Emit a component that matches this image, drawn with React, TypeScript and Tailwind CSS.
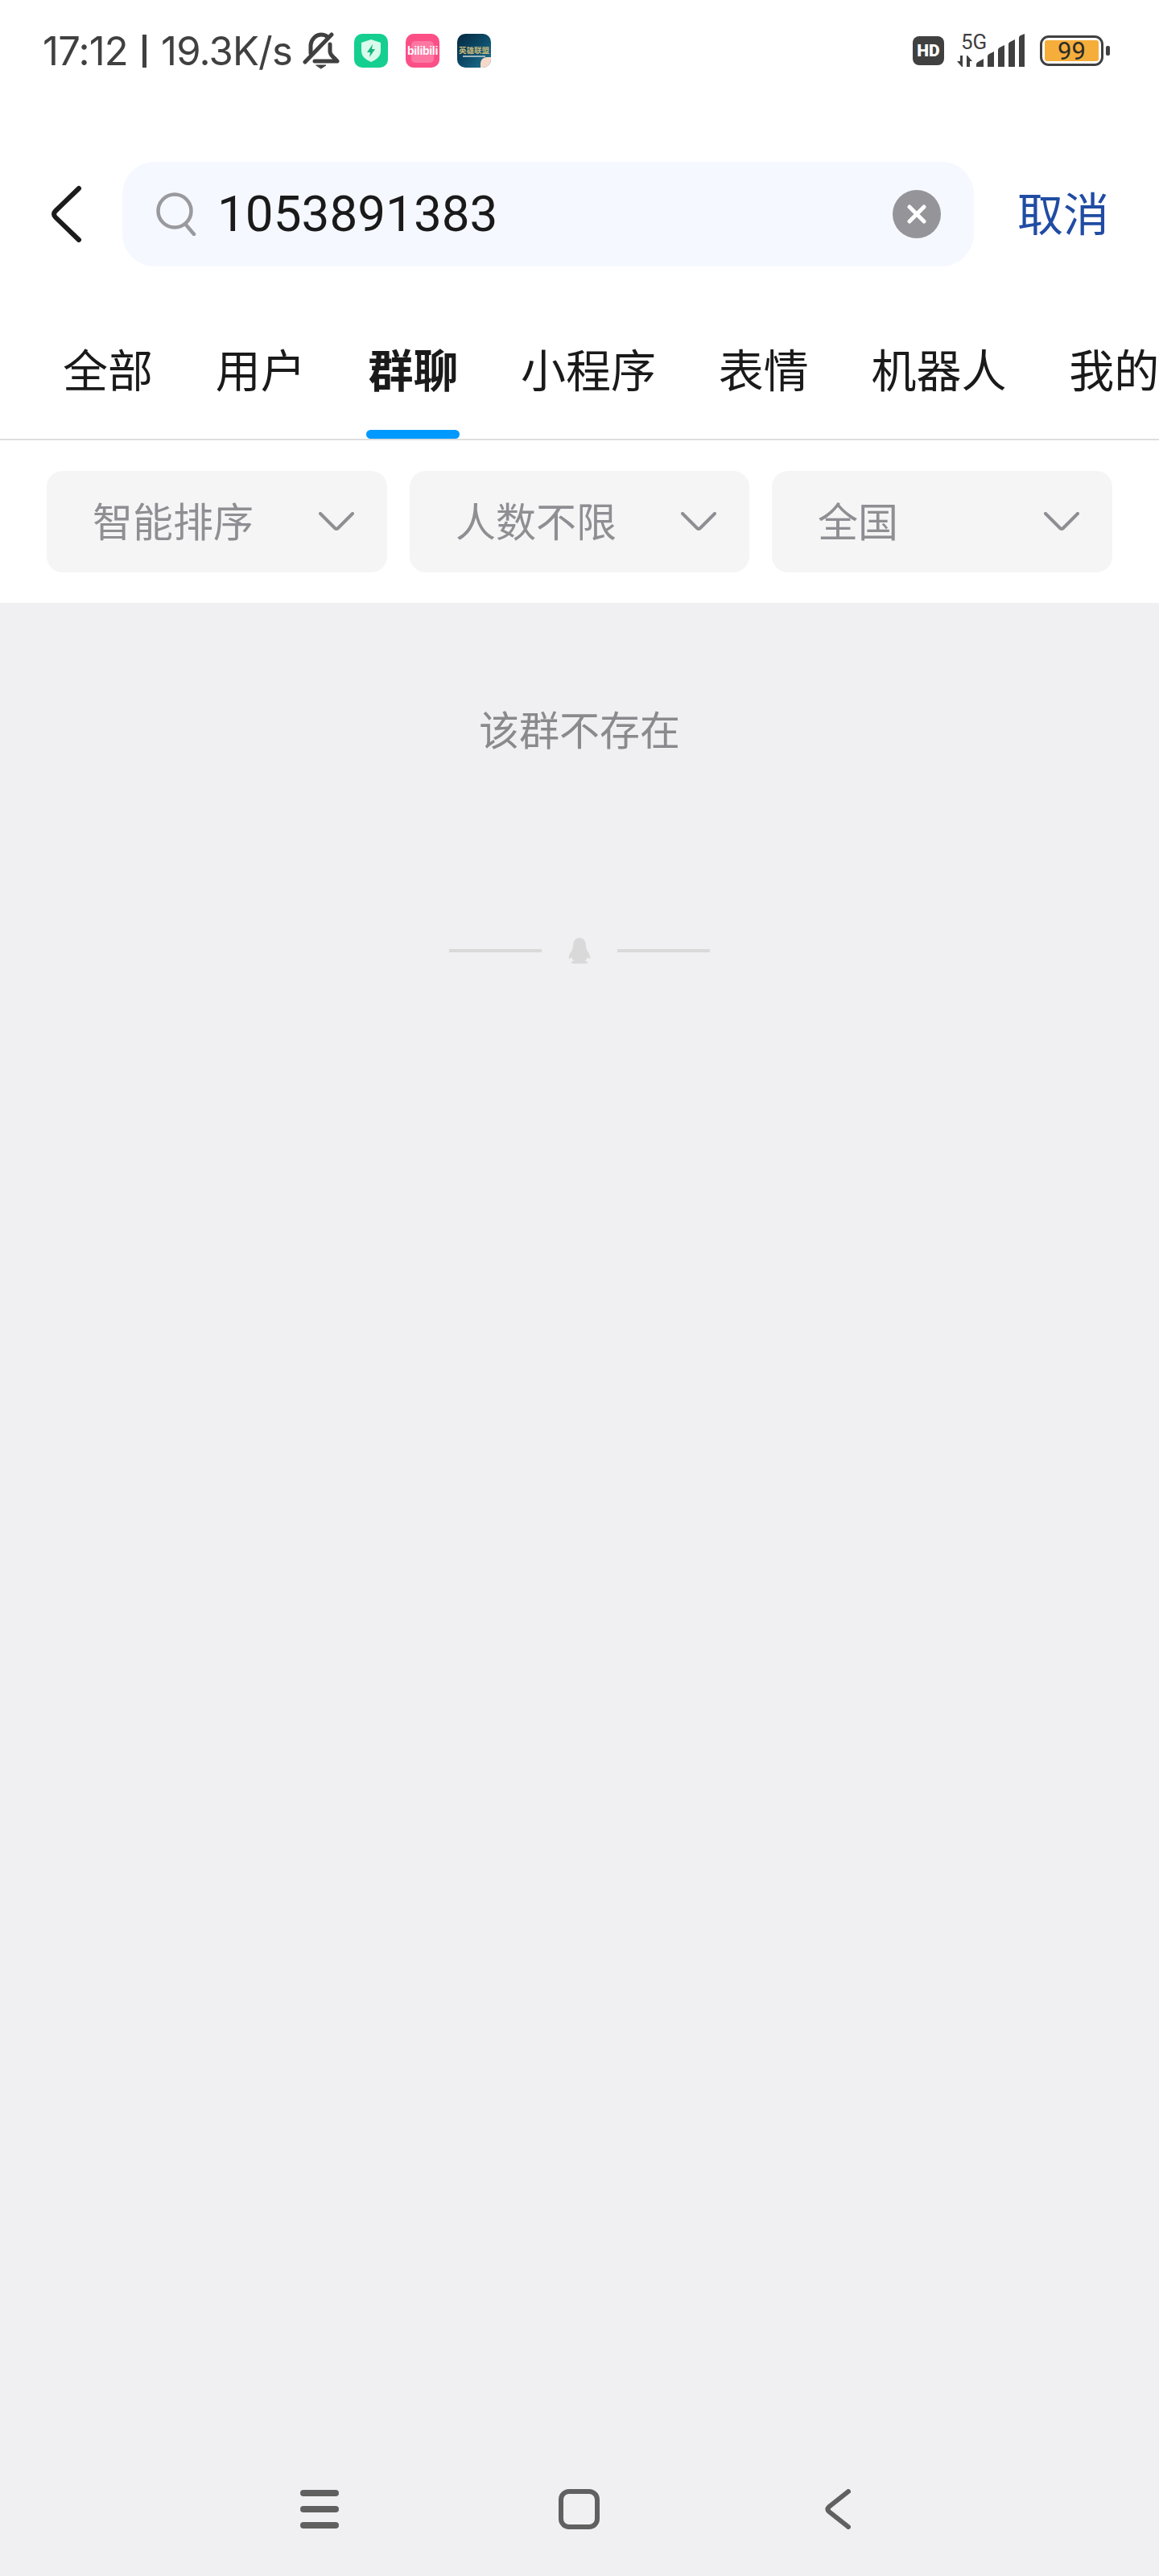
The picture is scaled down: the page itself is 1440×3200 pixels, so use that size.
const TABS = ['全部', '用户', '群聊', '小程序', '表情', '机器人', '我的'];
const FILTERS = [
  { label: '智能排序', width: 'w-[423px]' },
  { label: '人数不限', width: 'w-[422px]' },
  { label: '全国', width: 'w-[423px]' },
];
const CJK = "font-['Noto_Sans_CJK_SC','Noto_Sans',sans-serif]";

function Bell() {
  return (
    <svg width="46" height="46" viewBox="0 0 46 46" fill="none" stroke="#404040" strokeWidth="5" strokeLinecap="round" strokeLinejoin="round">
      <path d="M10 26V16C11 8 17 3 23 3c3 0 6 1 8 3" />
      <path d="M34 15v9c0 5 5 7 9 12H15" />
      <path d="M36 3 3 37" />
      <path d="M17 41h12l-6 4z" fill="#404040" strokeWidth="1" />
    </svg>
  );
}

function AppIcons() {
  return (
    <div className="ml-[18px] flex gap-[22px]">
      <div className="flex h-[42px] w-[42px] items-center justify-center rounded-[10px] bg-[#14cf90]">
        <svg width="26" height="30" viewBox="0 0 26 30">
          <path d="M13 1 25 5v10c0 7-5 11-12 14C6 26 1 22 1 15V5z" fill="#d9fbec" />
          <path d="M15 7 8 17h4l-1 6 7-10h-4z" fill="#14b57f" />
        </svg>
      </div>
      <div className="relative flex h-[42px] w-[42px] items-center justify-center overflow-hidden rounded-[10px] bg-[#fb4f86]">
        <div className="absolute left-[7px] top-[9px] h-[27px] w-[28px] rounded-[5px] bg-[#fd77a3]" />
        <span className="relative font-['Liberation_Sans',sans-serif] text-[14px] font-bold leading-none tracking-[-0.3px] text-white">bilibili</span>
      </div>
      <div className="relative flex h-[42px] w-[42px] flex-col items-center overflow-hidden rounded-[10px] bg-gradient-to-br from-[#06283f] via-[#0d4a68] to-[#1f7a94] pt-[15px]">
        <span className={`text-[9.5px] font-bold leading-[10px] text-[#c9b97a] ${CJK}`}>英雄联盟</span>
        <div className="mt-[2px] h-[2px] w-[28px] bg-[#9fb6bf]" />
        <div className="absolute bottom-0 right-0 h-[13px] w-[13px] rounded-tl-[8px] bg-[#f6d9c8]" />
      </div>
    </div>
  );
}

function Signal() {
  return (
    <div className="relative ml-[16px] h-[42px] w-[84px]">
      <span className="absolute left-[5px] top-[-3px] font-['Roboto',sans-serif] text-[26px] leading-[26px] text-[#404040]">5G</span>
      <svg className="absolute left-0 top-0" width="84" height="42" viewBox="0 0 84 42" fill="#404040">
        <path d="M0 34h4v-7h3v14h-1zM12 27h1l6 7h-3v7h-4z" />
        <path d="M24 41v-3q0-2 2-3l7-4v10zM38 41V28q0-2 2-3l6-3v19zM51 41V20q0-2 2-3l6-3v27zM64 41V13q0-2 2-3l6-3v34zM77 41V5q0-2 2-3l5-2v41z" />
      </svg>
    </div>
  );
}

function Battery() {
  return (
    <div className="ml-[19px] flex items-center gap-[3px]">
      <div className="flex h-[38px] w-[79px] rounded-[11px] border-[3px] border-[#404040] p-[3px]">
        <div className="flex flex-1 items-center justify-center rounded-[3px] bg-[#f5ae3a] font-['Roboto',sans-serif] text-[31px] leading-none text-[#2b2b2b]">99</div>
      </div>
      <div className="h-[12px] w-[5px] rounded-[2px] bg-[#404040]" />
    </div>
  );
}

function StatusBar() {
  return (
    <div className="flex h-[128px] items-center pb-[2px] pl-[53px] pr-[61px]">
      <span className="flex w-[310px] items-center justify-between font-['Inter',sans-serif] text-[49px] leading-none tracking-[-0.8px] text-[#404040]">
        <span>17:12</span>
        <span className="h-[41px] w-[5px] bg-[#404040]" />
        <span>19.3K/s</span>
      </span>
      <div className="ml-[13px] flex"><Bell /></div>
      <AppIcons />
      <div className="ml-auto flex items-center">
        <div className="flex h-[36px] w-[39px] items-center justify-center rounded-[8px] bg-[#404040] font-['Roboto',sans-serif] text-[21px] font-black leading-none text-white">HD</div>
        <Signal />
        <Battery />
      </div>
    </div>
  );
}

function SearchRow() {
  return (
    <div className="mt-[73px] flex h-[130px] items-center pl-[61px]">
      <svg width="44" height="74" viewBox="0 0 44 74" fill="none" stroke="#1c1c1c" strokeWidth="6" strokeLinecap="round" strokeLinejoin="round" className="mr-[47px]">
        <path d="M37 5 8 33q-4 4 0 8l29 28" />
      </svg>
      <div className="flex h-[130px] w-[1058px] items-center rounded-[40px] bg-[#f5f8ff] pl-[42px] pr-[41px]">
        <svg width="50" height="54" viewBox="0 0 50 54" fill="none" stroke="#9a9a9e" strokeWidth="4.5" strokeLinecap="round">
          <circle cx="23" cy="23" r="20.5" />
          <path d="M36 39l11 13" />
        </svg>
        <span className="ml-[26px] font-['Roboto',sans-serif] text-[62px] leading-none text-[#1a1a1a]">1053891383</span>
        <div className="ml-auto flex h-[60px] w-[60px] items-center justify-center rounded-full bg-[#949499]">
          <svg width="26" height="26" viewBox="0 0 26 26" stroke="#fff" strokeWidth="5" strokeLinecap="round">
            <path d="M4 4l18 18M22 4 4 22" />
          </svg>
        </div>
      </div>
      <span className={`ml-[54px] pb-[8px] text-[57px] leading-none text-[#204ca3] ${CJK}`}>取消</span>
    </div>
  );
}

function Tabs() {
  return (
    <div className="mt-[78px] flex h-[138px] gap-[77.7px] overflow-hidden border-b-2 border-[#dedede] pl-[78px] pt-[12px]">
      {TABS.map((tab) => (
        <div key={tab} className="relative h-[124px] shrink-0">
          <span className={`block text-[56px] leading-[72px] text-[#1a1a1a] ${CJK} ${tab === '群聊' ? 'font-bold' : ''}`}>{tab}</span>
          {tab === '群聊' && <div className="absolute bottom-0 left-[-2px] right-[-2px] h-[11px] rounded-full bg-[#0099ff]" />}
        </div>
      ))}
    </div>
  );
}

function Filters() {
  return (
    <div className="flex h-[202px] gap-[28px] bg-white pl-[58px] pt-[38px]">
      {FILTERS.map((f) => (
        <div key={f.label} className={`flex h-[126px] items-center rounded-[20px] bg-[#f5f5f6] pl-[57px] pr-[41px] ${f.width}`}>
          <span className={`pb-[7px] text-[50px] leading-none text-[#8e8e93] ${CJK}`}>{f.label}</span>
          <svg className="ml-auto" width="44" height="24" viewBox="0 0 44 24" fill="none" stroke="#8e8e93" strokeWidth="4" strokeLinecap="round" strokeLinejoin="round">
            <path d="M2 2l18 18q2 2 4 0L42 2" />
          </svg>
        </div>
      ))}
    </div>
  );
}

function Empty() {
  return (
    <div className="flex flex-col items-center pt-[120px]">
      <span className={`text-[50px] leading-[70px] text-[#8a8a8e] ${CJK}`}>该群不存在</span>
      <div className="mt-[226px] flex items-center">
        <div className="h-[4px] w-[115px] bg-[#d9d9d9]" />
        <svg className="mx-[33px]" width="28" height="32" viewBox="0 0 28 32" fill="#d9d9d9">
          <path d="M14 0c5 0 8 4 8 10 0 3 1 5 3 8 2 4 3 7 2 8-1 0-2-1-3-2-1 2-2 4-3 5h-14c-1-1-2-3-3-5-1 1-2 2-3 2-1-1 0-4 2-8 2-3 3-5 3-8C6 4 9 0 14 0z" />
          <rect x="4" y="29" width="20" height="3" rx="1.5" />
        </svg>
        <div className="h-[4px] w-[115px] bg-[#d9d9d9]" />
      </div>
    </div>
  );
}

function NavBar() {
  return (
    <div className="mb-[58px] mt-auto flex items-center pl-[373px]">
      <div className="flex w-[48px] flex-col gap-[12px]">
        <div className="h-[8px] rounded-full bg-[#606060]" />
        <div className="h-[8px] rounded-full bg-[#606060]" />
        <div className="h-[8px] rounded-full bg-[#606060]" />
      </div>
      <div className="ml-[273px] h-[50px] w-[51px] rounded-[13px] border-[6px] border-[#606060]" />
      <svg className="ml-[280px]" width="32" height="50" viewBox="0 0 32 50" fill="none" stroke="#606060" strokeWidth="6" strokeLinecap="round" strokeLinejoin="round">
        <path d="M29 3 5 22q-3 3 0 6l24 19" />
      </svg>
    </div>
  );
}

export default function App() {
  return (
    <div className="flex h-[3200px] w-[1440px] flex-col overflow-hidden bg-[#f0f0f3]">
      <div className="bg-white">
        <StatusBar />
        <SearchRow />
        <Tabs />
        <Filters />
      </div>
      <Empty />
      <NavBar />
    </div>
  );
}
